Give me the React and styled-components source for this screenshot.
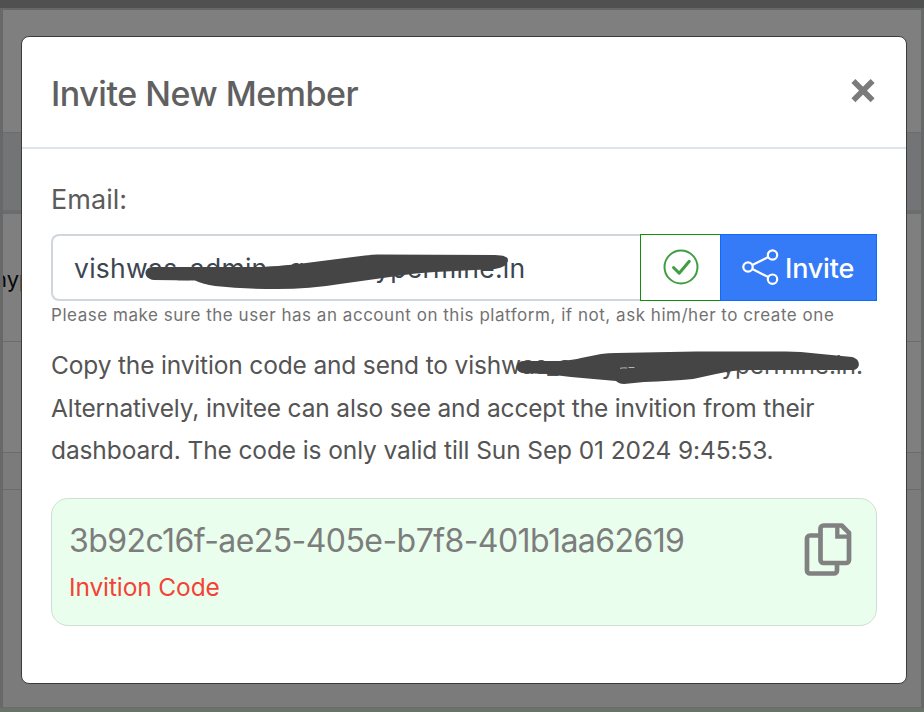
import React from "react";
import styled, { createGlobalStyle } from "styled-components";

const GlobalStyle = createGlobalStyle`
  * { box-sizing: border-box; }
  body { margin: 0; font-family: Inter, "Liberation Sans", sans-serif; }
`;

const Screen = styled.div`
  position: relative;
  width: 924px;
  height: 712px;
  overflow: hidden;
`;

const Page = styled.div`
  display: flex;
  flex-direction: column;
  height: 712px;
  border-top: 8px solid #505050;
  border-bottom: 4px solid #68736a;
  background: #676868;
  padding: 2px 3px 0;
`;

const TableRow = styled.div`
  flex: none;
  display: flex;
  align-items: center;
  height: ${(p) => p.$height}px;
  background: ${(p) => p.$fill || "#7f7f7f"};
  border-bottom: ${(p) => p.$rule || 1}px solid #6b6c6d;
  overflow: hidden;
  color: #080808;
  font-size: 22px;
  line-height: 28px;
`;

const CellText = styled.span`
  margin-left: -9px;
  margin-top: 3px;
`;

const Dialog = styled.section`
  position: absolute;
  left: 21px;
  top: 36px;
  width: 886px;
  height: 648px;
  display: flex;
  flex-direction: column;
  background: #fff;
  border: 1px solid #3c3c3d;
  border-radius: 8px;
  color: #545454;
`;

const Header = styled.header`
  display: flex;
  justify-content: space-between;
  height: 112px;
  padding: 34px 31px 0 29px;
  border-bottom: 2px solid #dfe4e9;
`;

const Title = styled.h1`
  margin: 0;
  font-size: 34px;
  line-height: 45px;
  font-weight: 500;
  letter-spacing: -0.47px;
  color: #606060;
  white-space: nowrap;
`;

const CloseButton = styled.button`
  width: 24px;
  height: 24px;
  margin-top: 8px;
  padding: 0;
  border: 0;
  background: none;
`;

const Body = styled.div`
  display: flex;
  flex-direction: column;
  padding: 32px 29px 0;
`;

const Label = styled.label`
  font-size: 27px;
  line-height: 38px;
  letter-spacing: 0.05px;
  color: #5b5b5b;
`;

const InputGroup = styled.div`
  display: flex;
  height: 67px;
  margin-top: 15px;
`;

const EmailField = styled.div`
  position: relative;
  width: 589px;
  padding: 14px 0 0 21px;
  border: 2px solid #d0d6dc;
  border-right: 0;
  border-radius: 8px 0 0 8px;
  font-size: 26.5px;
  line-height: 36px;
  letter-spacing: 0.27px;
  color: #3c4650;
  white-space: nowrap;
`;

const Gap = styled.span`
  display: inline-block;
  width: ${(p) => p.$width}px;
`;

const Scribble = styled.svg`
  position: absolute;
  left: ${(p) => p.$left}px;
  top: ${(p) => p.$top}px;
  fill: #454545;
`;

const Status = styled.div`
  display: flex;
  align-items: center;
  justify-content: center;
  width: 80px;
  padding: 0 0 2px 0;
  border: 1px solid #0e8f0e;
  border-right: 0;
`;

const InviteButton = styled.button`
  display: flex;
  align-items: center;
  width: 157px;
  padding: 0 0 0 21px;
  border: 1px solid #0d6bfb;
  background: #357af6;
  color: #fff;
  font: 500 27px/36px Inter, sans-serif;
  letter-spacing: -0.2px;
  gap: 6px;
`;

const ButtonText = styled.span`
  margin-top: 2px;
`;

const Help = styled.small`
  margin-top: 1px;
  font-size: 17px;
  line-height: 26px;
  letter-spacing: 0.53px;
  color: #727272;
  white-space: nowrap;
`;

const Message = styled.p`
  position: relative;
  margin: 16px 0 0;
  font-size: 24.5px;
  line-height: 42.5px;
  letter-spacing: -0.16px;
  white-space: nowrap;
`;

const Line = styled.span`
  display: block;
  letter-spacing: ${(p) => p.$spacing || -0.16}px;
`;

const CodeCard = styled.div`
  display: flex;
  justify-content: space-between;
  height: 128px;
  margin-top: 26px;
  padding: 22px 24px 0 17px;
  border: 1px solid #cfe0d2;
  border-radius: 17px;
  background: #e9feec;
`;

const Code = styled.div`
  margin-top: -1px;
  font-size: 32px;
  line-height: 42px;
  letter-spacing: -0.57px;
  color: #7d7d7d;
  white-space: nowrap;
`;

const CodeLabel = styled.div`
  margin-top: 5px;
  font-size: 24.5px;
  line-height: 40px;
  letter-spacing: -0.12px;
  color: #f44336;
`;

const CloseIcon = () => (
  <svg width="24" height="24" viewBox="0 0 24 24" fill="none" stroke="#7b7b7b" strokeWidth="5.6">
    <path d="M2.4 2 21.6 21.2M21.6 2 2.4 21.2" />
  </svg>
);

const CheckIcon = () => (
  <svg width="36" height="36" viewBox="0 0 36 36" fill="none" stroke="#3f9e42" strokeLinecap="round" strokeLinejoin="round">
    <circle cx="18" cy="18" r="16.5" strokeWidth="2" />
    <path d="M10.5 18.5 16.2 24.2 26.3 12.3" strokeWidth="3" />
  </svg>
);

const ShareIcon = () => (
  <svg width="37" height="38" viewBox="0 0 37 38" fill="none" stroke="#fff" strokeWidth="2.2">
    <circle cx="6" cy="18" r="4.7" />
    <circle cx="30.5" cy="6" r="4.7" />
    <circle cx="30.5" cy="30.2" r="4.7" />
    <path d="m10.3 16 16-8M10.3 20.1l16 8" />
  </svg>
);

const CopyIcon = () => (
  <svg width="48" height="56" viewBox="-0.5 -1.5 48 56" fill="none" stroke="#818181" strokeWidth="4.7" strokeLinejoin="round">
    <path d="M15.5 13H5.5a3 3 0 0 0-3 3v32a3 3 0 0 0 3 3h24a3 3 0 0 0 3-3v-6" />
    <path d="M19 3h18.2L44.5 10.3V37.5a3 3 0 0 1-3 3H19a3 3 0 0 1-3-3V6a3 3 0 0 1 3-3Z" />
    <path d="M32.8 3v11.2H44.5" strokeWidth="4.3" strokeLinejoin="miter" />
  </svg>
);

export default function App() {
  return (
    <>
      <GlobalStyle />
      <Screen>
        <Page>
          <TableRow $height={123} />
          <TableRow $height={81} $fill="#727476" $rule={4} />
          <TableRow $height={128}><CellText>hyp</CellText></TableRow>
          <TableRow $height={111} />
          <TableRow $height={37} $fill="#7b7b7b" />
          <TableRow $height={218} $fill="#7b7b7b" $rule={0.1} />
        </Page>
        <Dialog>
          <Header>
            <Title>Invite New Member</Title>
            <CloseButton aria-label="Close"><CloseIcon /></CloseButton>
          </Header>
          <Body>
            <Label>Email:</Label>
            <InputGroup>
              <EmailField>
                vishwas_admin<Gap $width={21} />g<Gap $width={70} />ypermine.in
                <Scribble $left={92} $top={18} width="366" height="38" viewBox="0 0 366 38">
                  <path d="M7 13H114C130 12.5 150 10.500 165 8.500L208 3Q220 1 232 .5L350 1Q363 1 363 7Q362 13 350 15L290 18Q270 19 245 23L195 30Q165 35 132 35Q98 35 70 32Q58 30 50 26.500L9 26C-2 25-2 14 7 13Z" />
                </Scribble>
              </EmailField>
              <Status><CheckIcon /></Status>
              <InviteButton><ShareIcon /><ButtonText>Invite</ButtonText></InviteButton>
            </InputGroup>
            <Help>Please make sure the user has an account on this platform, if not, ask him/her to create one</Help>
            <Message>
              <Line>Copy the invition code and send to vishwas_a<Gap $width={149.5} />ypermine.in.</Line>
              <Line>Alternatively, invitee can also see and accept the invition from their</Line>
              <Line $spacing={-0.11}>dashboard. The code is only valid till Sun Sep 01 2024 9:45:53.</Line>
              <Scribble $left={465} $top={7} width="344" height="36" viewBox="0 0 344 36">
                <path d="M7 10H43Q58 9 65 7L85 3Q92 2 100 2L180 0.500H270Q285 0.500 300 2.500L336 6C345 8 345 18 337 19H233Q218 19 200 23L177 28Q155 30 128 31L108 33Q103 33 100 30L55 26L30 23L6 22C-2 20-1 11 7 10Z" />
                <path d="M104 17.3q4-.8 7-.3M112.5 16.5h6" fill="none" stroke="#b5b5b5" strokeWidth="1" />
              </Scribble>
            </Message>
            <CodeCard>
              <div>
                <Code>3b92c16f-ae25-405e-b7f8-401b1aa62619</Code>
                <CodeLabel>Invition Code</CodeLabel>
              </div>
              <CopyIcon />
            </CodeCard>
          </Body>
        </Dialog>
      </Screen>
    </>
  );
}
